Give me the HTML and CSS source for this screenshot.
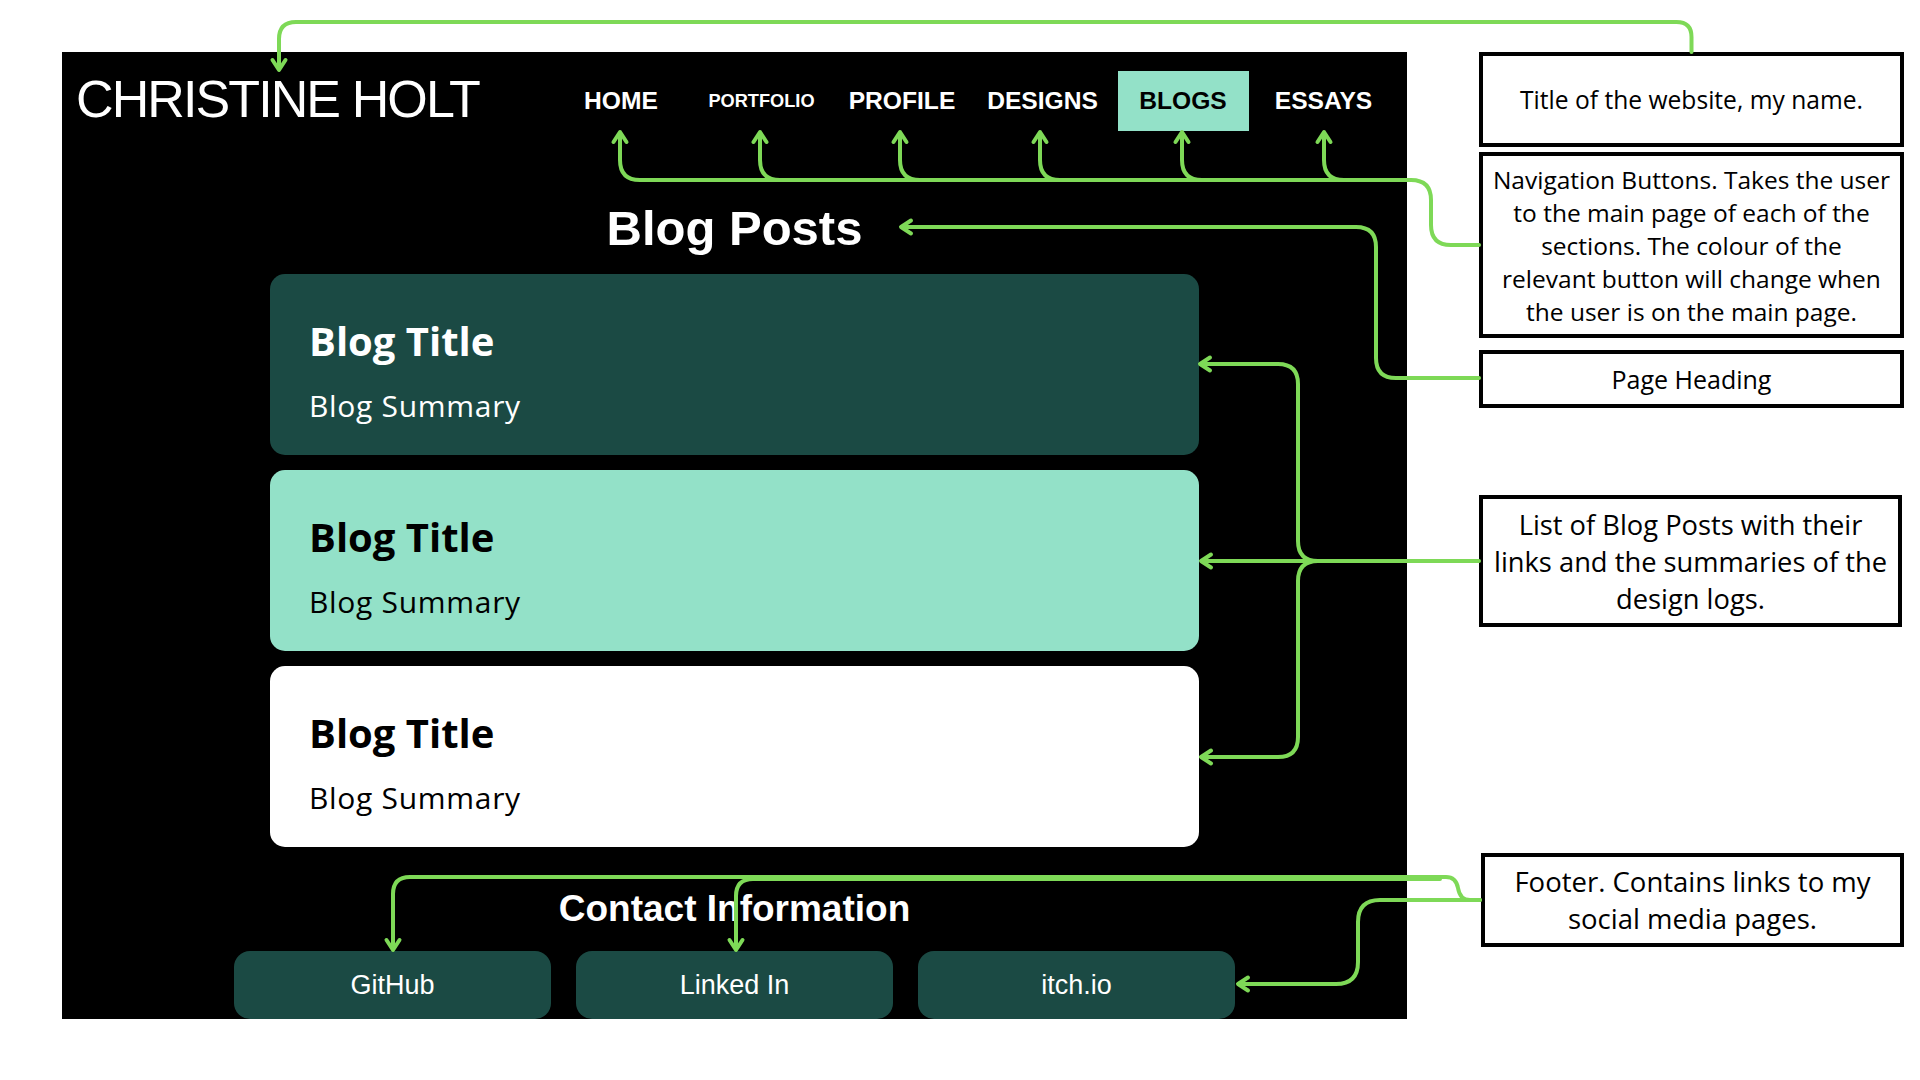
FILE: index.html
```html
<!DOCTYPE html>
<html lang="en">
<head>
    <meta charset="UTF-8">
    <meta name="viewport" content="width=device-width, initial-scale=1.0">
    <title>Blogs - Wireframe</title>
    <link rel="stylesheet" href="styles.css">
</head>
<body>

    <div class="canvas">

        <!-- Website mockup -->
        <div class="site">
            <header class="site-header">
                <h1 class="site-title">CHRISTINE HOLT</h1>
                <nav class="nav">
                    <a href="#">HOME</a>
                    <a href="#" class="small">PORTFOLIO</a>
                    <a href="#">PROFILE</a>
                    <a href="#">DESIGNS</a>
                    <a href="#" class="active">BLOGS</a>
                    <a href="#">ESSAYS</a>
                </nav>
            </header>

            <main class="content">
                <h2 class="page-heading">Blog Posts</h2>
                <ul class="posts">
                    <li class="post dark">
                        <h3>Blog Title</h3>
                        <p>Blog Summary</p>
                    </li>
                    <li class="post mint">
                        <h3>Blog Title</h3>
                        <p>Blog Summary</p>
                    </li>
                    <li class="post light">
                        <h3>Blog Title</h3>
                        <p>Blog Summary</p>
                    </li>
                </ul>
            </main>

            <footer class="site-footer">
                <h2>Contact Information</h2>
                <div class="socials">
                    <a href="#">GitHub</a>
                    <a href="#">Linked In</a>
                    <a href="#">itch.io</a>
                </div>
            </footer>
        </div>

        <!-- Annotation boxes -->
        <div class="note note-title">Title of the website, my name.</div>
        <div class="note note-nav">Navigation Buttons. Takes the user<br>to the main page of each of the<br>sections. The colour of the<br>relevant button will change when<br>the user is on the main page.</div>
        <div class="note note-heading">Page Heading</div>
        <div class="note note-posts">List of Blog Posts with their<br>links and the summaries of the<br>design logs.</div>
        <div class="note note-footer">Footer. Contains links to my<br>social media pages.</div>

        <!-- Connector lines -->
        <svg class="connectors" width="1920" height="1080" viewBox="0 0 1920 1080">
            <!-- title -->
            <path d="M1691.5 52 V37 Q1691.5 22 1676.5 22 H296 Q279 22 279 39 V68"/>
            <path d="M272.5 60 L279 70 L285.5 60"/>

            <!-- navigation -->
            <path d="M620 134 V160 Q620 180 640 180 H1411 Q1431 180 1431 200 V225 Q1431 245 1451 245 H1479"/>
            <path d="M760 134 V160 Q760 180 780 180"/>
            <path d="M900 134 V160 Q900 180 920 180"/>
            <path d="M1040 134 V160 Q1040 180 1060 180"/>
            <path d="M1182 134 V160 Q1182 180 1202 180"/>
            <path d="M1324 134 V160 Q1324 180 1344 180"/>
            <path d="M613.5 142 L620 132 L626.5 142"/>
            <path d="M753.5 142 L760 132 L766.5 142"/>
            <path d="M893.5 142 L900 132 L906.5 142"/>
            <path d="M1033.5 142 L1040 132 L1046.5 142"/>
            <path d="M1175.5 142 L1182 132 L1188.5 142"/>
            <path d="M1317.5 142 L1324 132 L1330.5 142"/>

            <!-- page heading -->
            <path d="M903 227 H1356 Q1376 227 1376 247 V358 Q1376 378 1396 378 H1479"/>
            <path d="M911 220.5 L901 227 L911 233.5"/>

            <!-- blog posts -->
            <path d="M1202 561 H1479"/>
            <path d="M1202 364 H1278 Q1298 364 1298 384 V541 Q1298 561 1318 561"/>
            <path d="M1202 757 H1278 Q1298 757 1298 737 V581 Q1298 561 1318 561"/>
            <path d="M1210 357.5 L1200 364 L1210 370.5"/>
            <path d="M1211 554.5 L1201 561 L1211 567.5"/>
            <path d="M1211 750.5 L1201 757 L1211 763.5"/>

            <!-- footer -->
            <path d="M393 948 V894 Q393 877 410 877 H1446 Q1456 877 1458 888 Q1460 900 1470 900 H1480"/>
            <path d="M736 948 V896 Q736 879 753 879 H1440"/>
            <path d="M1480 900 H1380 Q1358 900 1358 922 V962 Q1358 984 1336 984 H1240"/>
            <path d="M386.5 940 L393 950 L399.5 940"/>
            <path d="M729.5 940 L736 950 L742.5 940"/>
            <path d="M1248 977.5 L1238 984 L1248 990.5"/>
        </svg>

    </div>

</body>
</html>
```

FILE: styles.css
```css
body {
    margin: 0;
    background-color: #ffffff;
    font-family: "Liberation Sans", Arial, sans-serif;
}

.canvas {
    position: relative;
    width: 1920px;
    height: 1080px;
    overflow: hidden;
}

/* Website mockup */
.site {
    box-sizing: border-box;
    width: 1345px;
    height: 967px;
    margin: 52px 0 0 62px;
    background-color: #000000;
    color: #ffffff;
    display: flex;
    flex-direction: column;
}

.site-header {
    display: flex;
    align-items: flex-start;
    padding: 19px 18px 0 14px;
}

.site-title {
    margin: 2px 0 0;
    font-size: 52px;
    font-weight: 400;
    line-height: 1;
    letter-spacing: -1.9px;
}

.nav {
    margin-left: auto;
    display: flex;
    gap: 9.5px;
}

.nav a {
    width: 131px;
    height: 60px;
    display: flex;
    align-items: center;
    justify-content: center;
    color: #ffffff;
    text-decoration: none;
    font-weight: 700;
    font-size: 24.6px;
}

.nav a.small {
    font-size: 18.2px;
}

.nav a.active {
    background-color: #93e1c8;
    color: #000000;
}

.content {
    display: flex;
    flex-direction: column;
    align-items: center;
}

.page-heading {
    margin: 73px 0 0;
    font-size: 49px;
    font-weight: 700;
    line-height: 1;
}

.posts {
    list-style: none;
    margin: 21px 0 0;
    padding: 0;
    width: 929px;
    display: flex;
    flex-direction: column;
    gap: 15px;
}

.post {
    box-sizing: border-box;
    height: 181px;
    padding: 47px 39px 0;
    border-radius: 15px;
    font-family: "Open Sans", sans-serif;
}

.post h3 {
    margin: 0;
    font-size: 40px;
    font-weight: 700;
    line-height: 1;
}

.post p {
    margin: 30px 0 0;
    font-size: 30px;
    line-height: 1;
    letter-spacing: 0.7px;
}

.post.dark {
    background-color: #1b4a44;
    color: #ffffff;
}

.post.mint {
    background-color: #93e1c8;
    color: #000000;
}

.post.light {
    background-color: #ffffff;
    color: #000000;
}

.site-footer {
    display: flex;
    flex-direction: column;
    align-items: center;
}

.site-footer h2 {
    margin: 43px 0 0;
    font-size: 37px;
    font-weight: 700;
    line-height: 1;
}

.socials {
    display: flex;
    gap: 25px;
    margin-top: 24px;
}

.socials a {
    width: 317px;
    height: 68px;
    display: flex;
    align-items: center;
    justify-content: center;
    background-color: #1b4a44;
    border-radius: 16px;
    color: #ffffff;
    text-decoration: none;
    font-size: 27px;
}

/* Annotation boxes */
.note {
    position: absolute;
    box-sizing: border-box;
    display: flex;
    align-items: center;
    justify-content: center;
    text-align: center;
    border: 4px solid #000000;
    background-color: #ffffff;
    color: #000000;
    font-family: "Open Sans", sans-serif;
}

.note-title {
    left: 1479px;
    top: 52px;
    width: 425px;
    height: 95px;
    font-size: 24.6px;
}

.note-nav {
    left: 1479px;
    top: 152px;
    width: 425px;
    height: 186px;
    font-size: 24.5px;
    line-height: 33px;
}

.note-heading {
    left: 1479px;
    top: 350px;
    width: 425px;
    height: 58px;
    font-size: 25px;
}

.note-posts {
    left: 1479px;
    top: 495px;
    width: 423px;
    height: 132px;
    font-size: 27.3px;
    line-height: 37px;
}

.note-footer {
    left: 1481px;
    top: 853px;
    width: 423px;
    height: 94px;
    font-size: 27.5px;
    line-height: 37px;
}

/* Connector lines */
.connectors {
    position: absolute;
    top: 0;
    left: 0;
    pointer-events: none;
    fill: none;
    stroke: #7ed957;
    stroke-width: 4;
    stroke-linecap: round;
    stroke-linejoin: round;
}
```
